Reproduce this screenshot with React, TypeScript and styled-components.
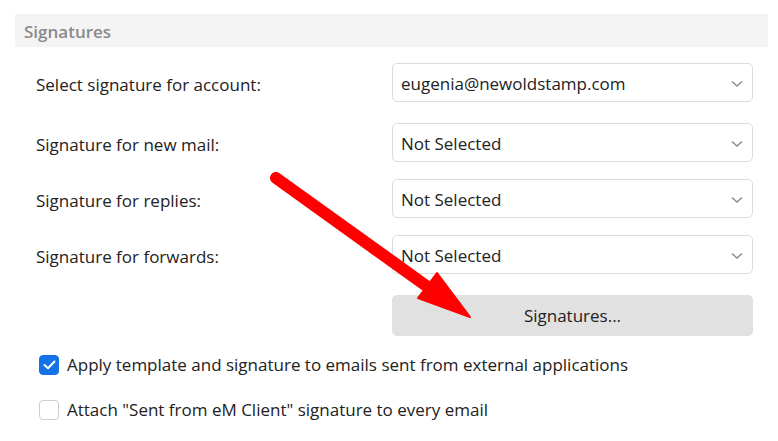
import styled, { createGlobalStyle } from 'styled-components';

const GlobalStyle = createGlobalStyle`
  body {
    margin: 0;
    background: #ffffff;
    font-family: 'Open Sans', 'Noto Sans', sans-serif;
    color: #1f1f1f;
  }
`;

const Page = styled.div`
  position: relative;
  width: 778px;
  height: 441px;
  padding-top: 14px;
  box-sizing: border-box;
  overflow: hidden;
`;

const SectionHeader = styled.div`
  margin: 0 10px 0 15px;
  height: 33px;
  background: #f4f4f4;
  display: flex;
  align-items: center;
  padding: 2px 0 0 9px;
  box-sizing: border-box;
  font-size: 17px;
  font-weight: 600;
  color: #8a8a8a;
`;

const Form = styled.div`
  display: flex;
  flex-direction: column;
  padding: 16px 25px 0 36px;
`;

const Row = styled.div<{ $mt?: number }>`
  display: grid;
  grid-template-columns: 356px 361px;
  align-items: center;
  margin-top: ${(p) => p.$mt ?? 0}px;
`;

const Label = styled.span`
  padding-top: 3px;
  font-size: 17px;
  color: #222;
`;

const Select = styled.div`
  height: 39px;
  box-sizing: border-box;
  border: 1px solid #dcdcdc;
  border-radius: 5px;
  background: #fff;
  display: flex;
  align-items: center;
  justify-content: space-between;
  padding: 2px 9px 0 8px;
  font-size: 17px;
  color: #222;
`;

const Button = styled.div`
  grid-column: 2;
  height: 41px;
  border-radius: 5px;
  background: #e1e1e1;
  display: flex;
  align-items: center;
  justify-content: center;
  font-size: 17px;
  color: #222;
`;

const CheckRow = styled.label<{ $mt: number }>`
  display: flex;
  align-items: center;
  gap: 8px;
  margin: ${(p) => p.$mt}px 0 0 3px;
  font-size: 17px;
  color: #222;
`;

const Box = styled.span<{ $checked?: boolean }>`
  flex: none;
  width: 20px;
  height: 20px;
  box-sizing: border-box;
  border-radius: 4px;
  border: 1px solid ${(p) => (p.$checked ? '#1471e6' : '#cfcfcf')};
  background: ${(p) => (p.$checked ? '#1471e6' : '#fff')};
  display: flex;
  align-items: center;
  justify-content: center;
`;

const Arrow = styled.svg`
  position: absolute;
  left: 0;
  top: 0;
  pointer-events: none;
`;

const Chevron = () => (
  <svg width="12" height="8" viewBox="0 0 12 8">
    <path d="M1 1.5 L6 6 L11 1.5" fill="none" stroke="#8c8c8c" strokeWidth="1.4" />
  </svg>
);

const selects = [
  { label: 'Select signature for account:', value: 'eugenia@newoldstamp.com', mt: 0 },
  { label: 'Signature for new mail:', value: 'Not Selected', mt: 21 },
  { label: 'Signature for replies:', value: 'Not Selected', mt: 17 },
  { label: 'Signature for forwards:', value: 'Not Selected', mt: 17 },
];

const App = () => {
  return (
    <Page>
      <GlobalStyle />
      <SectionHeader>Signatures</SectionHeader>
      <Form>
        {selects.map((s) => (
          <Row key={s.label} $mt={s.mt}>
            <Label>{s.label}</Label>
            <Select>
              <span>{s.value}</span>
              <Chevron />
            </Select>
          </Row>
        ))}
        <Row $mt={21}>
          <Button>Signatures...</Button>
        </Row>
        <CheckRow $mt={17}>
          <Box $checked>
            <svg width="13" height="10" viewBox="0 0 13 10">
              <path d="M1.5 5 L5 8.3 L11.5 1.5" fill="none" stroke="#fff" strokeWidth="2" strokeLinecap="round" strokeLinejoin="round" />
            </svg>
          </Box>
          Apply template and signature to emails sent from external applications
        </CheckRow>
        <CheckRow $mt={22}>
          <Box />
          Attach "Sent from eM Client" signature to every email
        </CheckRow>
      </Form>
      <Arrow width="778" height="441">
        <line x1="276" y1="178" x2="432" y2="290" stroke="#ff0000" strokeWidth="12" strokeLinecap="round" />
        <polygon points="470,317 418,298 437,273" fill="#ff0000" stroke="#ff0000" strokeWidth="2" strokeLinejoin="round" />
      </Arrow>
    </Page>
  );
};

export default App;
